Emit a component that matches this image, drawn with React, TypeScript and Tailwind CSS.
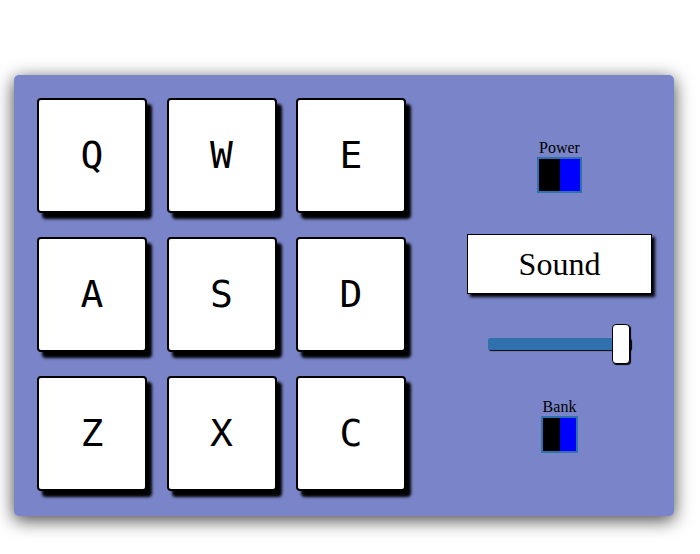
import React from 'react';

const pads = ['Q', 'W', 'E', 'A', 'S', 'D', 'Z', 'X', 'C'];

function Toggle({ label, box }: { label: string; box: string }) {
  return (
    <div className="flex flex-col items-center">
      <p className="text-[16px] leading-[18px] text-black" style={{ fontFamily: '"Liberation Serif", serif' }}>
        {label}
      </p>
      <div className={`${box} border-2 border-[#3070ac] flex`}>
        <div className="flex-1 bg-black" />
        <div className="flex-1 bg-[#0000ff]" />
      </div>
    </div>
  );
}

export default function App() {
  return (
    <div className="w-[700px] h-[554px] bg-white overflow-hidden pt-[75px] pl-[14px]">
      <div className="w-[660px] h-[441px] bg-[#7a85c9] rounded-[5px] shadow-[0_4px_18px_rgba(0,0,0,0.75)] flex items-start">
        {/* Drum pads */}
        <div className="grid grid-cols-[110px_110px_110px] gap-x-[19.5px] gap-y-[24px] pt-[23px] pl-[23px]">
          {pads.map((key) => (
            <div
              key={key}
              className="h-[115px] bg-white border-2 border-black rounded-[4px] shadow-[5px_6px_3px_rgba(0,0,0,1)] flex items-center justify-center text-[38px] text-black"
              style={{ fontFamily: '"DejaVu Sans Mono", monospace' }}
            >
              {key}
            </div>
          ))}
        </div>

        {/* Controls */}
        <div className="ml-auto w-[229px] flex flex-col items-center pt-[64px]">
          <Toggle label="Power" box="w-[45px] h-[36px]" />
          <div
            className="mt-[41px] w-[185px] h-[60px] bg-white border border-black shadow-[3px_3px_3px_rgba(0,0,0,1)] flex items-center justify-center text-[32px] text-black"
            style={{ fontFamily: '"Liberation Serif", serif' }}
          >
            Sound
          </div>
          <div className="mt-[30px] w-[143px] h-[40px] relative flex items-center">
            <div className="w-full h-[12px] bg-[#3070ac] rounded-[2px] shadow-[1px_1px_1px_rgba(0,0,0,1)]" />
            <div className="absolute right-[1px] top-0 w-[18px] h-[40px] bg-white border border-black rounded-[4px] shadow-[1px_1px_1px_rgba(0,0,0,1)]" />
          </div>
          <div className="mt-[34px]">
            <Toggle label="Bank" box="w-[37px] h-[37px]" />
          </div>
        </div>
      </div>
    </div>
  );
}
